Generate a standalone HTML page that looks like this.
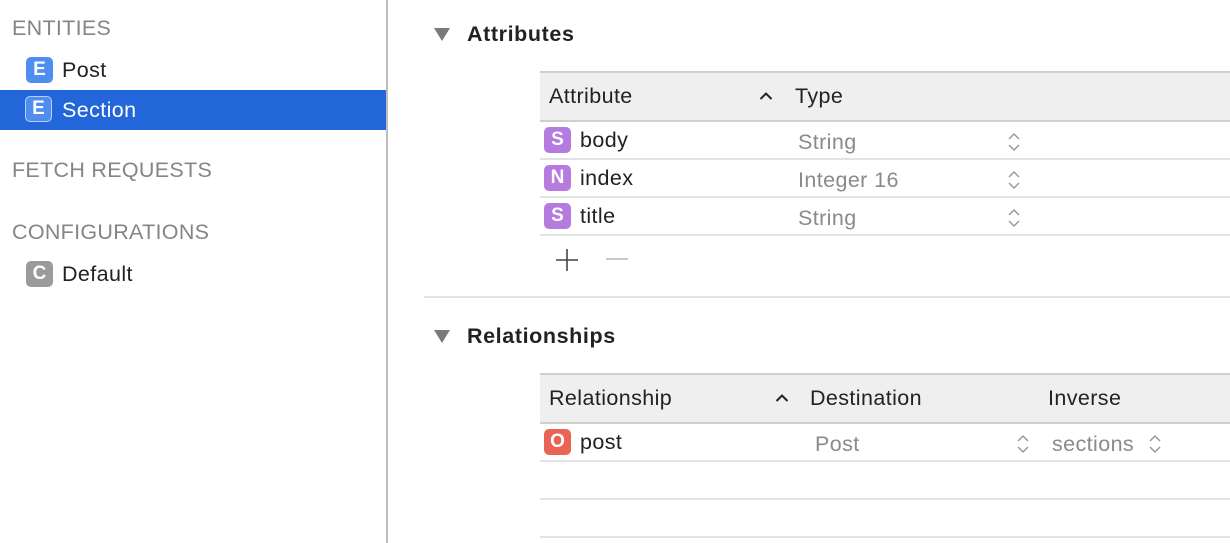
<!DOCTYPE html>
<html><head><meta charset="utf-8"><style>
*{margin:0;padding:0;box-sizing:border-box}
body{width:1230px;height:543px;background:#fff;position:relative;overflow:hidden;font-family:"Liberation Sans",Arial,sans-serif;color:#222}
.a{position:absolute;white-space:nowrap}
.hd{font-size:21.5px;color:#858585;letter-spacing:0.3px}
.t{font-size:21.5px;letter-spacing:0.4px}
.b{font-size:21.5px;font-weight:bold;letter-spacing:0.6px}
.ic{position:absolute;width:27px;height:26px;border-radius:5px;color:#fff;font-weight:bold;font-size:19px;text-align:center;line-height:26px}
.g{color:#8a8a8a;font-size:21.5px;letter-spacing:0.4px}
.line{position:absolute;height:2px;background:#e3e3e3}
.st{position:absolute;width:14px;height:22px}
.tri{position:absolute;width:0;height:0;border-left:8px solid transparent;border-right:8px solid transparent;border-top:13px solid #7a7a7a}
</style></head><body>
<div class="a" style="left:386px;top:0;width:2px;height:543px;background:#bdbdbd"></div>
<div class="a hd" style="left:12px;top:16px">ENTITIES</div>
<div class="ic" style="left:26px;top:57px;background:#4f8ef0">E</div>
<div class="a t" style="left:62px;top:58px">Post</div>
<div class="a" style="left:0;top:90px;width:386px;height:40px;background:#2366d9"></div>
<div class="ic" style="left:25px;top:96px;background:#4f8ef0;border:1.5px solid #b8d0fa;line-height:23px">E</div>
<div class="a t" style="left:62px;top:98px;color:#fff">Section</div>
<div class="a hd" style="left:12px;top:158px">FETCH REQUESTS</div>
<div class="a hd" style="left:12px;top:220px">CONFIGURATIONS</div>
<div class="ic" style="left:26px;top:261px;background:#9b9b9b">C</div>
<div class="a t" style="left:62px;top:262px">Default</div>

<div class="tri" style="left:434px;top:28px"></div>
<div class="a b" style="left:467px;top:22px">Attributes</div>
<div class="a" style="left:540px;top:71px;width:690px;height:51px;background:#efefef;border-top:2px solid #cfcfcf;border-bottom:2px solid #cfcfcf"></div>
<div class="a t" style="left:549px;top:84px">Attribute</div>
<svg class="a" style="left:758px;top:91px" width="16" height="10"><path d="M2.5 8 L8 2.5 L13.5 8" stroke="#222" stroke-width="2" fill="none"/></svg>
<div class="a t" style="left:795px;top:84px">Type</div>
<div class="ic" style="left:544px;top:127px;background:#b57bdf">S</div>
<div class="a t" style="left:580px;top:128px">body</div>
<div class="a g" style="left:798px;top:130px">String</div>
<div class="line" style="left:540px;top:158px;width:690px"></div>
<div class="ic" style="left:544px;top:165px;background:#b57bdf">N</div>
<div class="a t" style="left:580px;top:166px">index</div>
<div class="a g" style="left:798px;top:168px">Integer 16</div>
<div class="line" style="left:540px;top:196px;width:690px"></div>
<div class="ic" style="left:544px;top:203px;background:#b57bdf">S</div>
<div class="a t" style="left:580px;top:204px">title</div>
<div class="a g" style="left:798px;top:206px">String</div>
<div class="line" style="left:540px;top:234px;width:690px"></div>
<svg class="st" style="left:1007px;top:131px" viewBox="0 0 14 22"><path d="M2 8 L7 3 L12 8 M2 14 L7 19 L12 14" stroke="#999" stroke-width="1.5" fill="none"/></svg>
<svg class="st" style="left:1007px;top:169px" viewBox="0 0 14 22"><path d="M2 8 L7 3 L12 8 M2 14 L7 19 L12 14" stroke="#999" stroke-width="1.5" fill="none"/></svg>
<svg class="st" style="left:1007px;top:207px" viewBox="0 0 14 22"><path d="M2 8 L7 3 L12 8 M2 14 L7 19 L12 14" stroke="#999" stroke-width="1.5" fill="none"/></svg>
<svg class="a" style="left:555px;top:248px" width="24" height="24"><path d="M12 1 V23 M1 12 H23" stroke="#444" stroke-width="1.6"/></svg>
<div class="a" style="left:606px;top:258px;width:22px;height:2px;background:#c8c8c8"></div>
<div class="line" style="left:424px;top:296px;width:806px"></div>

<div class="tri" style="left:434px;top:330px"></div>
<div class="a b" style="left:467px;top:324px">Relationships</div>
<div class="a" style="left:540px;top:373px;width:690px;height:51px;background:#efefef;border-top:2px solid #cfcfcf;border-bottom:2px solid #cfcfcf"></div>
<div class="a t" style="left:549px;top:386px">Relationship</div>
<svg class="a" style="left:774px;top:393px" width="16" height="10"><path d="M2.5 8 L8 2.5 L13.5 8" stroke="#222" stroke-width="2" fill="none"/></svg>
<div class="a t" style="left:810px;top:386px">Destination</div>
<div class="a t" style="left:1048px;top:386px">Inverse</div>
<div class="ic" style="left:544px;top:429px;background:#ea6456">O</div>
<div class="a t" style="left:580px;top:430px">post</div>
<div class="a g" style="left:815px;top:432px">Post</div>
<svg class="st" style="left:1016px;top:433px" viewBox="0 0 14 22"><path d="M2 8 L7 3 L12 8 M2 14 L7 19 L12 14" stroke="#999" stroke-width="1.5" fill="none"/></svg>
<div class="a g" style="left:1052px;top:432px">sections</div>
<svg class="st" style="left:1148px;top:433px" viewBox="0 0 14 22"><path d="M2 8 L7 3 L12 8 M2 14 L7 19 L12 14" stroke="#999" stroke-width="1.5" fill="none"/></svg>
<div class="line" style="left:540px;top:460px;width:690px"></div>
<div class="line" style="left:540px;top:498px;width:690px"></div>
<div class="line" style="left:540px;top:536px;width:690px"></div>
</body></html>
